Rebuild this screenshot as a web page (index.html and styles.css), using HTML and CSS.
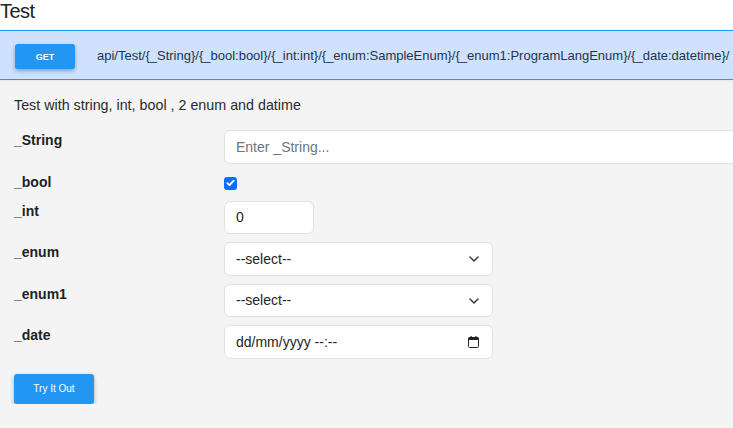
FILE: index.html
```html
<!DOCTYPE html>
<html lang="en">
<head>
<meta charset="utf-8">
<title>Test</title>
<link rel="stylesheet" href="styles.css">
</head>
<body>
<header class="page-head">
  <h1 class="title">Test</h1>
</header>
<section class="endpoint">
  <button class="btn btn-get" type="button">GET</button>
  <span class="route">api/Test/{_String}/{_bool:bool}/{_int:int}/{_enum:SampleEnum}/{_enum1:ProgramLangEnum}/{_date:datetime}/</span>
</section>
<main class="content">
  <p class="desc">Test with string, int, bool , 2 enum and datime</p>
  <form class="form">
    <div class="row">
      <label class="lbl">_String</label>
      <input class="field field-wide" type="text" placeholder="Enter _String...">
    </div>
    <div class="row">
      <label class="lbl">_bool</label>
      <span class="check">
        <svg width="9" height="8" viewBox="0 0 9 8"><path d="M1.3 4.1 L3.5 6.2 L7.7 1.6" fill="none" stroke="#fff" stroke-width="1.8" stroke-linecap="round" stroke-linejoin="round"/></svg>
      </span>
    </div>
    <div class="row">
      <label class="lbl">_int</label>
      <input class="field field-num" type="text" value="0">
    </div>
    <div class="row">
      <label class="lbl">_enum</label>
      <div class="select-wrap">
        <select class="field field-select"><option>--select--</option></select>
        <svg class="chev" width="10" height="6" viewBox="0 0 10 6"><path d="M1 1 L5 5 L9 1" fill="none" stroke="#343a40" stroke-width="1.5" stroke-linecap="round" stroke-linejoin="round"/></svg>
      </div>
    </div>
    <div class="row">
      <label class="lbl">_enum1</label>
      <div class="select-wrap">
        <select class="field field-select"><option>--select--</option></select>
        <svg class="chev" width="10" height="6" viewBox="0 0 10 6"><path d="M1 1 L5 5 L9 1" fill="none" stroke="#343a40" stroke-width="1.5" stroke-linecap="round" stroke-linejoin="round"/></svg>
      </div>
    </div>
    <div class="row">
      <label class="lbl">_date</label>
      <div class="select-wrap">
        <div class="field field-date"><span>dd/mm/yyyy --:--</span></div>
        <svg class="cal" width="11" height="12" viewBox="0 0 11 12"><rect x="0.5" y="1.5" width="10" height="10" rx="1" fill="#fff" stroke="#222" stroke-width="1"/><rect x="0.5" y="1.5" width="10" height="2.5" fill="#222"/><rect x="2.5" y="0" width="1.2" height="2" fill="#222"/><rect x="7.3" y="0" width="1.2" height="2" fill="#222"/></svg>
      </div>
    </div>
    <button class="btn btn-try" type="button">Try It Out</button>
  </form>
</main>
</body>
</html>
```

FILE: styles.css
```css
html, body {
  margin: 0;
  padding: 0;
}
body {
  background: #f4f4f4;
  font-family: "Liberation Sans", Arial, sans-serif;
  color: #222;
  overflow-x: hidden;
  width: 733px;
}
.page-head {
  background: #fff;
  height: 30px;
}
.title {
  margin: 0;
  font-size: 20px;
  font-weight: normal;
  line-height: 22px;
  color: #222;
  letter-spacing: -0.5px;
}
.endpoint {
  display: flex;
  align-items: center;
  gap: 22px;
  height: 48px;
  padding: 0 0 0 15px;
  background: #cfe1fd;
  border-top: 1px solid #2196f3;
  border-bottom: 1px solid #2196f3;
  box-shadow: 0 0 3px rgba(0, 0, 0, 0.12);
  white-space: nowrap;
}
.btn {
  border: none;
  background: #2196f3;
  color: #fff;
  border-radius: 3px;
  box-shadow: 0 2px 4px rgba(0, 0, 0, 0.3);
  font-family: "Liberation Sans", Arial, sans-serif;
  padding: 0;
  cursor: pointer;
}
.btn-get {
  width: 60px;
  height: 25px;
  font-size: 9px;
  font-weight: bold;
  margin-top: 3px;
}
.route {
  font-size: 13px;
  color: #23344f;
  margin-top: 1px;
}
.content {
  padding: 15px 0 0 14px;
}
.desc {
  margin: 0 0 15px;
  font-size: 14.3px;
  line-height: 20px;
  color: #2b2b2b;
}
.form {
  display: flex;
  flex-direction: column;
  gap: 8px;
}
.row {
  display: grid;
  grid-template-columns: 210px 1fr;
  align-items: start;
}
.lbl {
  font-size: 14px;
  font-weight: bold;
  line-height: 20px;
  color: #1f1f1f;
}
.field {
  box-sizing: border-box;
  height: 33.5px;
  border: 1px solid #dee2e6;
  border-radius: 6px;
  background: #fff;
  font-family: "Liberation Sans", Arial, sans-serif;
  font-size: 14px;
  color: #212529;
  padding: 0 11px;
  margin: 0;
  outline: none;
}
.field::placeholder {
  color: #6c757d;
}
.field-wide {
  width: 540px;
}
.field-num {
  width: 90px;
}
.select-wrap {
  position: relative;
  width: 269px;
  height: 33.5px;
}
.field-select {
  width: 269px;
  -webkit-appearance: none;
  appearance: none;
}
.field-date {
  width: 269px;
  display: flex;
  align-items: center;
}
.chev {
  position: absolute;
  right: 14px;
  top: 14px;
}
.cal {
  position: absolute;
  right: 14px;
  top: 11px;
}
.check {
  display: flex;
  align-items: center;
  justify-content: center;
  width: 13px;
  height: 13px;
  margin: 5px 0 3px;
  background: #0d6efd;
  border-radius: 3px;
}
.btn-try {
  width: 80px;
  height: 30px;
  font-size: 10px;
  margin-top: 7px;
  align-self: flex-start;
}
```
